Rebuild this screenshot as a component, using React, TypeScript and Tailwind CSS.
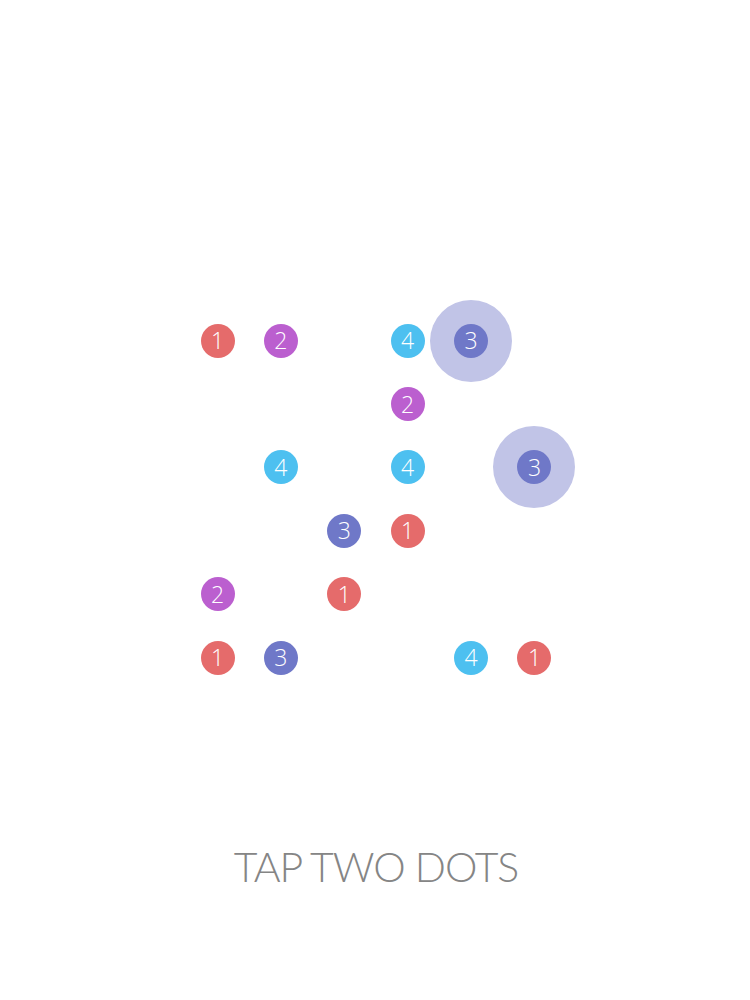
const DOT_COLORS: Record<number, string> = {
  1: 'bg-[#e56b6b]',
  2: 'bg-[#bb5fcf]',
  3: 'bg-[#6f78c8]',
  4: 'bg-[#4dc0f0]',
};

// 0 = empty cell, negative = selected dot with a halo
const BOARD: number[][] = [
  [1, 2, 0, 4, -3, 0],
  [0, 0, 0, 2, 0, 0],
  [0, 4, 0, 4, 0, -3],
  [0, 0, 3, 1, 0, 0],
  [2, 0, 1, 0, 0, 0],
  [1, 3, 0, 0, 4, 1],
];

function Dot({ value }: { value: number }) {
  const n = Math.abs(value);
  const selected = value < 0;
  return (
    <div className="relative flex h-[63.4px] w-[63.4px] items-center justify-center">
      {selected && <div className="absolute left-1/2 top-1/2 h-[82px] w-[82px] -translate-x-1/2 -translate-y-1/2 rounded-full bg-[#c1c4e7]" />}
      <div
        className={`relative flex h-[34px] w-[34px] items-center justify-center rounded-full font-['Open_Sans',sans-serif] text-[23px] font-light leading-none text-white ${DOT_COLORS[n]}`}
      >
        {n}
      </div>
    </div>
  );
}

export default function App() {
  return (
    <div className="flex h-[1000px] w-[750px] flex-col items-center bg-white pl-[2px] pt-[309px]">
      <div className="grid grid-cols-[repeat(6,63.4px)]">
        {BOARD.flatMap((row, r) =>
          row.map((v, c) => (v === 0 ? <div key={`${r}-${c}`} className="h-[63.4px] w-[63.4px]" /> : <Dot key={`${r}-${c}`} value={v} />)),
        )}
      </div>
      <div className="mt-[157px] font-['Lato',sans-serif] text-[41px] font-light leading-none tracking-[-1px] text-[#858585] antialiased">
        TAP TWO DOTS
      </div>
    </div>
  );
}
